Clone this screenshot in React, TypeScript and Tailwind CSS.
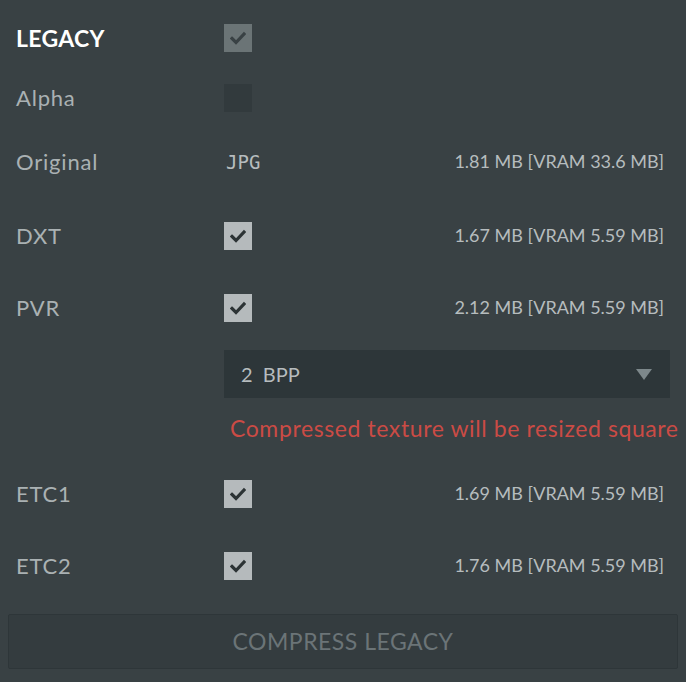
import React from "react";

const font = { fontFamily: "Lato, 'Open Sans', sans-serif" };

function Check({ on, dim }: { on?: boolean; dim?: boolean }) {
  const bg = dim ? "bg-[#6b7476]" : on ? "bg-[#b5babc]" : "bg-[#323a3d]";
  const stroke = dim ? "#394144" : "#2c3335";
  return (
    <div className={`w-7 h-7 flex items-center justify-center ${bg}`}>
      {on && (
        <svg width="16" height="14" viewBox="0 0 16 14">
          <path d="M2 7.5 L6 11.5 L14 3" fill="none" stroke={stroke} strokeWidth="3.2" strokeLinecap="square" />
        </svg>
      )}
    </div>
  );
}

function Row({ label, on, size, mt, children }: { label: string; on?: boolean; size?: string; mt: string; children?: React.ReactNode }) {
  return (
    <div className={`flex items-center h-7 pl-4 pr-[22px] ${mt}`}>
      <div className="w-[208px] -mt-px text-[22px] tracking-[0.8px] text-[#aab1b3]">{label}</div>
      {children ?? <Check on={on} />}
      <div className="ml-auto -mt-px text-[18px] text-[#b6bcbe]">{size}</div>
    </div>
  );
}

export default function App() {
  return (
    <div className="w-[686px] h-[682px] bg-[#394144] flex flex-col pt-[24px] overflow-hidden" style={font}>
      <div className="flex items-center h-7 pl-4">
        <div className="w-[208px] text-[23px] font-bold text-white tracking-[0.3px]">LEGACY</div>
        <Check on dim />
      </div>
      <Row label="Alpha" mt="mt-[32px]" />
      <Row label="Original" size="1.81 MB [VRAM 33.6 MB]" mt="mt-[36px]">
        <div className="pl-[2px] text-[19px] text-[#b6bcbe]" style={{ fontFamily: "'DejaVu Sans Mono', monospace" }}>JPG</div>
      </Row>
      <Row label="DXT" on size="1.67 MB [VRAM 5.59 MB]" mt="mt-[46px]" />
      <Row label="PVR" on size="2.12 MB [VRAM 5.59 MB]" mt="mt-[44px]" />
      <div className="mt-[28px] ml-[224px] mr-4 h-12 bg-[#2d3639] flex items-center pl-[17px] pr-[18px]">
        <span className="text-[20px] text-[#b6bcbe] whitespace-pre">2  BPP</span>
        <svg className="ml-auto" width="16" height="11" viewBox="0 0 16 11">
          <path d="M0 0 H16 L8 11 Z" fill="#7d888b" />
        </svg>
      </div>
      <div className="mt-[16px] ml-[230px] h-7 leading-7 text-[23px] tracking-[0.6px] text-[#cb4b45] whitespace-nowrap">
        Compressed texture will be resized square
      </div>
      <Row label="ETC1" on size="1.69 MB [VRAM 5.59 MB]" mt="mt-[38px]" />
      <Row label="ETC2" on size="1.76 MB [VRAM 5.59 MB]" mt="mt-[44px]" />
      <button className="mt-[34px] mx-2 h-[55px] bg-[#343c3f] border border-[#2e3639] rounded-[2px] text-[23px] text-[#6b7477] tracking-[0.5px]">
        COMPRESS LEGACY
      </button>
    </div>
  );
}
